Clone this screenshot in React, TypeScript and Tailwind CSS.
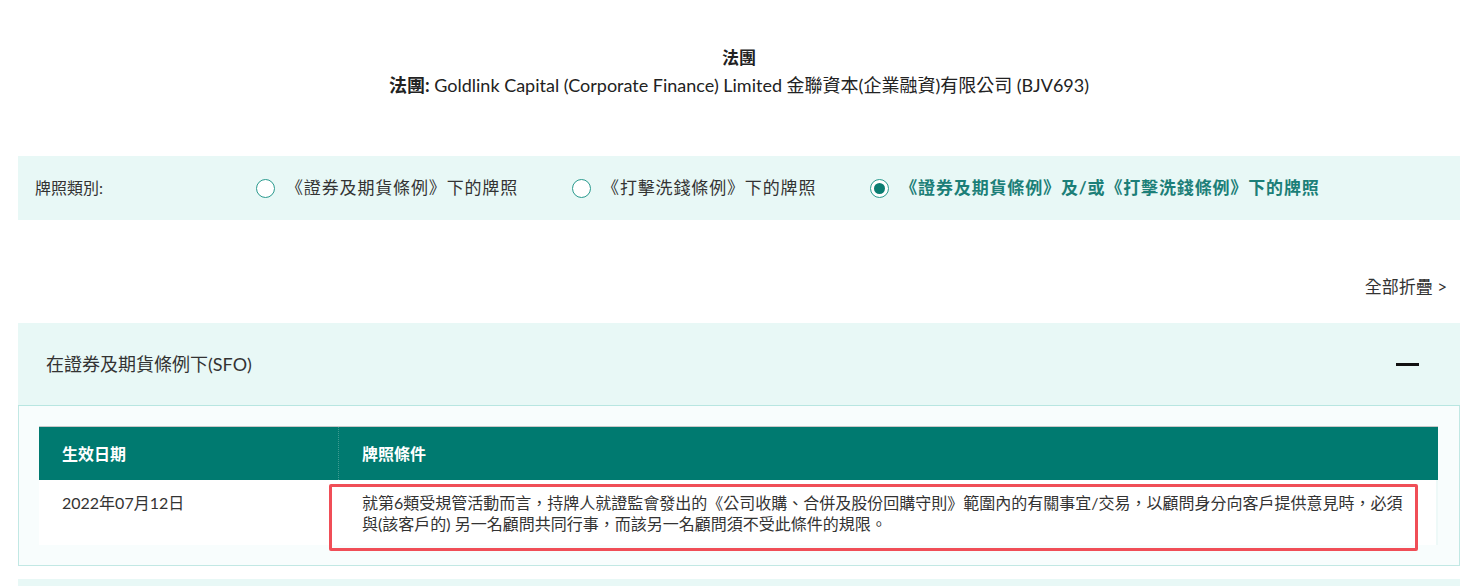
import React from "react";

const font = { fontFamily: 'Lato, "Noto Sans CJK TC", "Noto Sans CJK SC", sans-serif' };

function Radio({ checked, label }: { checked?: boolean; label: string }) {
  return (
    <div className="flex items-center">
      <span className="w-[19px] h-[19px] rounded-full border-[1.5px] border-[#2a9a8e] bg-white flex items-center justify-center shrink-0">
        {checked && <span className="w-[11px] h-[11px] rounded-full bg-[#0b7d72]" />}
      </span>
      <span
        className={
          "ml-[11px] text-[17px] tracking-[0.85px] leading-[22px] " +
          (checked ? "font-bold text-[#1c7f78]" : "text-[#333333]")
        }
      >
        {label}
      </span>
    </div>
  );
}

export default function App() {
  return (
    <div className="w-[1478px] h-[586px] overflow-hidden bg-white text-[#333333]" style={font}>
      <div className="pt-[46px] flex flex-col items-center">
        <div className="text-[17px] font-bold leading-[24px] text-[#222]">法團</div>
        <div className="mt-[3px] text-[18px] leading-[24px] text-[#222]">
          <span className="font-bold">法團:</span> Goldlink Capital (Corporate Finance) Limited 金聯資本(企業融資)有限公司 (BJV693)
        </div>
      </div>

      <div className="mx-[18px] mt-[59px] h-[64px] bg-[#e8f8f6] flex items-center">
        <div className="pl-[17px] w-[238px] text-[16px] leading-[20px] text-[#333]">牌照類別:</div>
        <div className="flex items-center gap-[54px]">
          <Radio label="《證券及期貨條例》下的牌照" />
          <Radio label="《打擊洗錢條例》下的牌照" />
          <Radio checked label="《證券及期貨條例》及/或《打擊洗錢條例》下的牌照" />
        </div>
      </div>

      <div className="mt-[56px] pr-[31px] flex justify-end">
        <span className="text-[17px] leading-[22px] text-[#333]">全部折疊 &gt;</span>
      </div>

      <div className="mx-[18px] mt-[25px]">
        <div className="h-[83px] bg-[#e8f8f6] flex items-center justify-between pl-[28px] pr-[41px] border-b border-[#b8e6e1]">
          <span className="text-[18px] leading-[24px] text-[#333]">在證券及期貨條例下(SFO)</span>
          <span className="w-[23px] h-[3px] bg-[#111]" />
        </div>
        <div className="bg-[#f8fdfd] border border-t-0 border-[#c2e8e4] px-[20px] pt-[20px] pb-[20px]">
          <div className="w-[1399px] border-t border-[#c8c8c8]">
            <div className="flex h-[53px] bg-[#007a70] text-white font-bold text-[16px]">
              <div className="w-[300px] pl-[23px] flex items-center border-r border-dotted border-[#3f9a91]">生效日期</div>
              <div className="flex-1 pl-[23px] flex items-center">牌照條件</div>
            </div>
            <div className="relative flex h-[65px] bg-white border-r-2 border-[#eef9f8]">
              <div className="w-[300px] pl-[23px] pt-[12px] text-[16px] leading-[21px]">2022年07月12日</div>
              <div className="flex-1 pl-[23px] pr-[20px] pt-[12px] text-[16px] leading-[21px]">
                就第6類受規管活動而言，持牌人就證監會發出的《公司收購、合併及股份回購守則》範圍內的有關事宜/交易，以顧問身分向客戶提供意見時，必須與(該客戶的) 另一名顧問共同行事，而該另一名顧問須不受此條件的規限。
              </div>
              <div className="absolute left-[290px] top-[4px] w-[1089px] h-[67px] border-[3px] border-[#f04e57] rounded-[2px] pointer-events-none" />
            </div>
          </div>
        </div>
        <div className="mt-[13px] h-[20px] bg-[#e8f8f6]" />
      </div>
    </div>
  );
}
